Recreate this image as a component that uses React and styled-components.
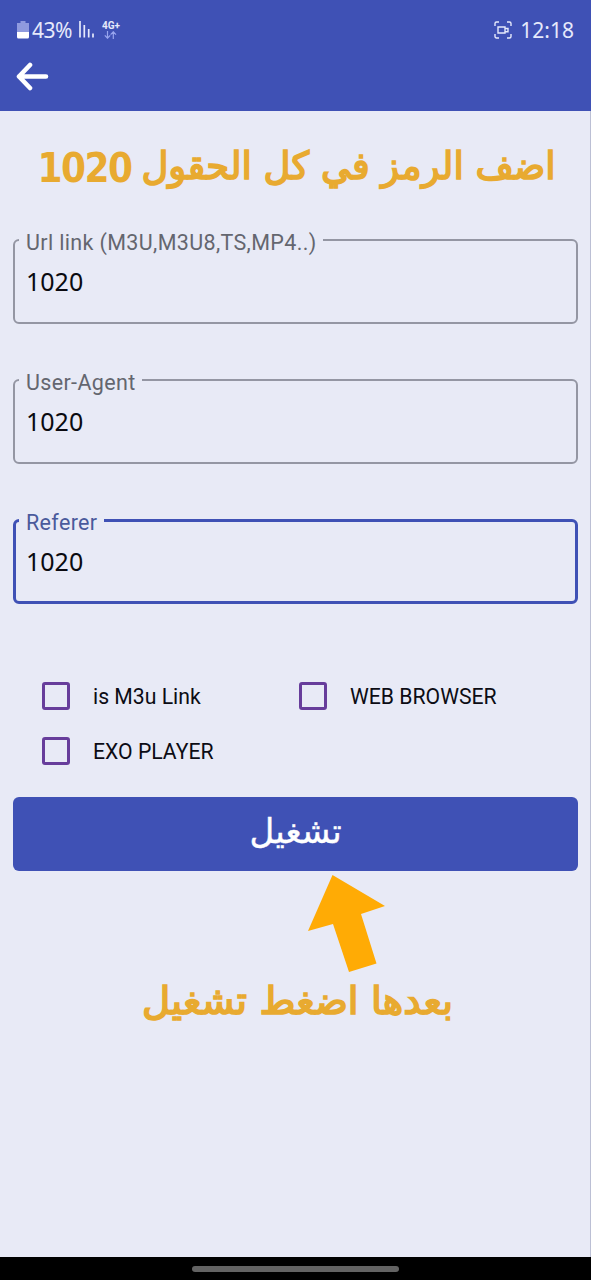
import { styled, createGlobalStyle } from "styled-components";

const GlobalStyle = createGlobalStyle`
  * {
    box-sizing: border-box;
  }

  body {
    margin: 0;
    background: #e8eaf6;
  }
`;

const Screen = styled.div`
  width: 591px;
  height: 1280px;
  display: flex;
  flex-direction: column;
  overflow: hidden;
  background: #e8eaf6;
  font-family: Roboto, "Noto Sans", sans-serif;
`;

const Header = styled.header`
  height: 111px;
  flex-shrink: 0;
  background: #3f51b5;
`;

const StatusBar = styled.div`
  height: 59px;
  padding: 0 17px 0 17px;
  display: flex;
  align-items: center;
  justify-content: space-between;
  font-family: "Noto Sans", sans-serif;
  font-size: 21px;
  color: #e6e9fb;
`;

const StatusGroup = styled.div`
  display: flex;
  align-items: center;
  gap: ${({ $gap }) => $gap}px;
`;

const Percent = styled.span`
  letter-spacing: -0.5px;
  margin-left: -4px;
`;

const Network = styled.div`
  display: flex;
  flex-direction: column;
  align-items: center;
  font-family: Roboto, sans-serif;
  font-size: 10px;
  font-weight: 700;
  line-height: 10px;
`;

const BackButton = styled.button`
  display: block;
  border: 0;
  padding: 0;
  margin: 3px 0 0 16px;
  background: none;
  height: 30px;
`;

const Main = styled.main`
  flex: 1;
  padding: 0 12px 0 13px;
  display: flex;
  flex-direction: column;
  border-right: 1px solid #bbbfd4;
`;

const Hint = styled.p`
  height: ${({ $height }) => $height}px;
  margin: 0;
  display: flex;
  align-items: center;
  justify-content: center;
  gap: 10px;
  direction: rtl;
  font-family: "DejaVu Sans", sans-serif;
  font-size: 38px;
  white-space: nowrap;
  color: #e8aa30;
  -webkit-text-stroke: 1.7px #e8aa30;
  transform: translate(${({ $x }) => $x}px, ${({ $y }) => $y}px)
    scaleX(${({ $stretch }) => $stretch});
`;

const Code = styled.span`
  padding-top: 5px;
  font-family: "DejaVu Sans Condensed", "DejaVu Sans", sans-serif;
  font-stretch: condensed;
  font-weight: 700;
  font-size: 41px;
  letter-spacing: -1.5px;
  -webkit-text-stroke: 0;
`;

const Form = styled.form`
  display: flex;
  flex-direction: column;
`;

const Field = styled.fieldset`
  min-width: 0;
  height: 96px;
  margin: 0 0 44px;
  padding: 0 11px 0 ${({ $active }) => ($active ? 3 : 4)}px;
  border: ${({ $active }) => ($active ? "3px solid #3f51b5" : "2px solid #9496a3")};
  border-radius: 6px;
  color: ${({ $active }) => ($active ? "#4a5a9c" : "#64666f")};
`;

const Label = styled.legend`
  height: 24px;
  padding: 0 6px 0 7px;
  font-size: 21.5px;
  line-height: 29px;
  letter-spacing: 0.35px;
`;

const Input = styled.input`
  display: block;
  width: 100%;
  height: 36px;
  padding: 0 7px;
  margin-top: 11px;
  border: 0;
  outline: 0;
  background: none;
  font-family: "Noto Sans", sans-serif;
  font-size: 25px;
  color: #0a0a10;
`;

const Options = styled.div`
  display: grid;
  grid-template-columns: 257px 1fr;
  grid-auto-rows: 55px;
  padding-left: 29px;
  margin-top: 20px;
`;

const Option = styled.label`
  display: flex;
  align-items: center;
  gap: 23px;
  font-size: 21.2px;
  line-height: 28px;
  color: #0c0c14;
`;

const OptionText = styled.span`
  padding-top: 2px;
`;

const Checkbox = styled.input`
  appearance: none;
  width: 28px;
  height: 28px;
  margin: 0;
  border: 3px solid #673d9b;
  border-radius: 3px;
`;

const PlayButton = styled.button`
  height: 74px;
  margin: 19px 0 0;
  padding: 0 0 6px;
  border: 0;
  border-radius: 6px;
  background: #3f51b5;
  color: #ffffff;
  font-family: "DejaVu Sans", sans-serif;
  font-size: 34px;
  -webkit-text-stroke: 0.4px #ffffff;
`;

const Arrow = styled.svg`
  margin: 3px 0 0 295px;
  flex-shrink: 0;
`;

const NavBar = styled.footer`
  height: 23px;
  flex-shrink: 0;
  padding-top: 9px;
  background: #000000;
`;

const Handle = styled.div`
  width: 207px;
  height: 6px;
  margin: 0 auto;
  border-radius: 3px;
  background: #636363;
`;

const fields = [
  { label: "Url link (M3U,M3U8,TS,MP4..)", value: "1020" },
  { label: "User-Agent", value: "1020" },
  { label: "Referer", value: "1020", active: true },
];

const options = ["is M3u Link", "WEB BROWSER", "EXO PLAYER"];

const BatteryIcon = () => (
  <svg width="12" height="18" viewBox="0 0 12 18">
    <path d="M3.5 0h5v2H12v9H0V2h3.5z" fill="#8f9ade" />
    <path d="M0 11h12v5a1.5 1.5 0 0 1-1.5 1.5h-9A1.5 1.5 0 0 1 0 16z" fill="#ffffff" />
  </svg>
);

const SignalIcon = () => (
  <svg width="16" height="17" viewBox="0 0 16 17">
    <path
      d="M1 0v16.5M5.3 4v12.5M9.7 8v8.5M14 12.5v4"
      stroke="#e6e9fb"
      strokeWidth="1.7"
    />
  </svg>
);

const TransferIcon = () => (
  <svg width="13" height="8" viewBox="0 0 13 8" fill="none">
    <path
      d="M3.5 0v7M0.8 4.4l2.7 2.8 2.7-2.8M9.3 8V1M6.6 3.6L9.3.8 12 3.6"
      stroke="#98a5ee"
      strokeWidth="1.2"
    />
  </svg>
);

const RecordIcon = () => (
  <svg width="18" height="18" viewBox="0 0 18 18" fill="none" stroke="#e6e9fb">
    <path
      d="M1 5V2.5A1.5 1.5 0 0 1 2.5 1H5M13 1h2.5A1.5 1.5 0 0 1 17 2.5V5M17 13v2.5a1.5 1.5 0 0 1-1.5 1.5H13M5 17H2.5A1.5 1.5 0 0 1 1 15.5V13"
      strokeWidth="1.4"
    />
    <path d="M4 6h7v6H4zM11 7.5h3v3.2h-3" strokeWidth="1.4" />
  </svg>
);

const BackIcon = () => (
  <svg width="33" height="29" viewBox="0 0 33 29" fill="none">
    <path
      d="M14 3L3 14.5 14 26M3 14.5h27"
      stroke="#ffffff"
      strokeWidth="4.6"
      strokeLinecap="round"
      strokeLinejoin="round"
    />
  </svg>
);

const App = () => {
  return (
    <Screen>
      <GlobalStyle />
      <Header>
        <StatusBar>
          <StatusGroup $gap={7}>
            <BatteryIcon />
            <Percent>43%</Percent>
            <SignalIcon />
            <Network>
              4G+
              <TransferIcon />
            </Network>
          </StatusGroup>
          <StatusGroup $gap={8}>
            <RecordIcon />
            <span>12:18</span>
          </StatusGroup>
        </StatusBar>
        <BackButton aria-label="Back">
          <BackIcon />
        </BackButton>
      </Header>
      <Main>
        <Hint $height={117} $x={1} $y={-4} $stretch={0.975}>
          <span>اضف الرمز في كل الحقول</span>
          <Code>1020</Code>
        </Hint>
        <Form>
          {fields.map(({ label, value, active }) => (
            <Field key={label} $active={active}>
              <Label>{label}</Label>
              <Input defaultValue={value} />
            </Field>
          ))}
          <Options>
            {options.map((item) => (
              <Option key={item}>
                <Checkbox type="checkbox" />
                <OptionText>{item}</OptionText>
              </Option>
            ))}
          </Options>
          <PlayButton type="button">تشغيل</PlayButton>
        </Form>
        <Arrow width="78" height="98" viewBox="0 0 78 98">
          <path d="M24.5 1L77 32l-24 8 15.5 49.5L41 98 25 50 0 57z" fill="#ffab05" />
        </Arrow>
        <Hint $height={56} $x={2} $y={1} $stretch={1.02}>
          <span>بعدها اضغط تشغيل</span>
        </Hint>
      </Main>
      <NavBar>
        <Handle />
      </NavBar>
    </Screen>
  );
};

export default App;
